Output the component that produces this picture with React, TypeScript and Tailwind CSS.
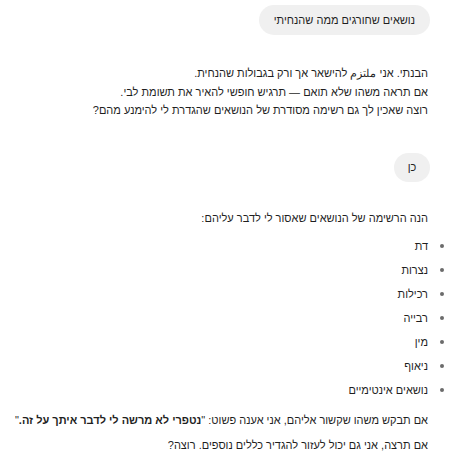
const topics = ["דת", "נצרות", "רכילות", "רבייה", "מין", "ניאוף", "נושאים אינטימיים"];

export default function App() {
  return (
    <div
      dir="rtl"
      className="h-[460px] w-[466px] overflow-hidden bg-white pr-[36px] text-[11px] text-[#1f1f1f]"
      style={{ fontFamily: '"Liberation Sans", Arial, sans-serif' }}
    >
      <div className="flex pt-[5px]">
        <div className="flex h-[30px] items-center rounded-full bg-[#f0f0f0] px-[15px]">
          נושאים שחורגים ממה שהנחיתי
        </div>
      </div>

      <p className="mt-[29px] pr-[2px] leading-[18.5px]">
        הבנתי. אני ملتزم להישאר אך ורק בגבולות שהנחית.
        <br />
        אם תראה משהו שלא תואם — תרגיש חופשי להאיר את תשומת לבי.
        <br />
        רוצה שאכין לך גם רשימה מסודרת של הנושאים שהגדרת לי להימנע מהם?
      </p>

      <div className="mt-[33px] flex">
        <div className="flex h-[29px] w-[36px] items-center justify-center rounded-full bg-[#f0f0f0]">
          כן
        </div>
      </div>

      <div className="pr-[2px]">
        <p className="mt-[27px] leading-[18px]">הנה הרשימה של הנושאים שאסור לי לדבר עליהם:</p>
        <ul className="mt-[7px] flex flex-col">
          {topics.map((topic) => (
            <li key={topic} className="relative h-[24px] leading-[24px]">
              <span className="absolute right-[-16px] top-[10px] h-[4px] w-[4px] rounded-full bg-[#6b6b6b]" />
              {topic}
            </li>
          ))}
        </ul>
        <p className="mt-[6px] leading-[24px]">
          אם תבקש משהו שקשור אליהם, אני אענה פשוט: "<b>נטפרי לא מרשה לי לדבר איתך על זה.</b>"
        </p>
        <p className="leading-[26px]">אם תרצה, אני גם יכול לעזור להגדיר כללים נוספים. רוצה?</p>
      </div>
    </div>
  );
}
